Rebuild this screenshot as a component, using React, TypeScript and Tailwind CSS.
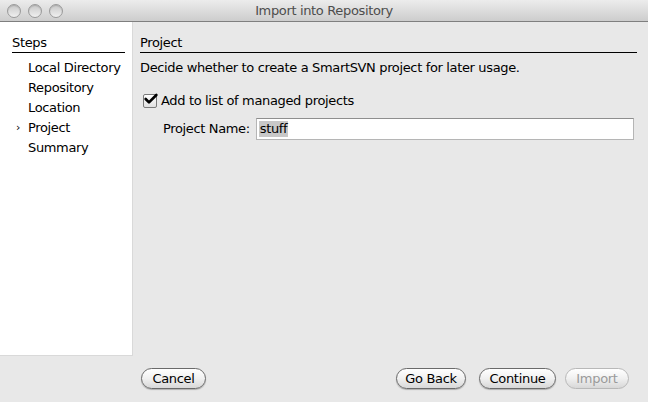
import { Check } from 'lucide-react';

const steps = ['Local Directory', 'Repository', 'Location', 'Project', 'Summary'];
const current = 'Project';

const Light = () => (
  <div className="w-[14px] h-[14px] rounded-full border border-[#9a9a9a] bg-gradient-to-b from-[#c8c8c8] to-[#f0f0f0] shadow-[inset_0_1px_1px_rgba(0,0,0,0.15)]" />
);

const Button = ({ label, disabled, w }: { label: string; disabled?: boolean; w: string }) => (
  <button
    className={`${w} h-[21px] rounded-full border text-[13px] leading-none flex items-center justify-center tracking-[-0.3px] bg-gradient-to-b from-white via-[#f0f0f0] to-[#d8d8d8] ${
      disabled ? 'border-[#b8b8b8] text-[#9a9a9a]' : 'border-[#6a6a6a] text-black shadow-[0_1px_1px_rgba(0,0,0,0.25)]'
    }`}>
    {label}
  </button>
);

export default function App() {
  return (
    <div className="w-[648px] h-[402px] bg-[#e8e8e8] flex flex-col overflow-hidden text-[13px] text-black tracking-[-0.35px]" style={{ fontFamily: '"Lucida Grande", "DejaVu Sans", sans-serif' }}>
      <div className="h-[22px] shrink-0 relative flex items-center justify-center bg-gradient-to-b from-[#ececec] to-[#cdcdcd] border-b border-[#7f7f7f]">
        <div className="absolute left-[7px] top-[4px] flex gap-[7px]">
          <Light />
          <Light />
          <Light />
        </div>
        <span className="text-[#4d4d4d] text-[13px]">Import into Repository</span>
      </div>

      <div className="flex h-[334px]">
        <div className="w-[133px] shrink-0 bg-white border-r border-b border-[#d9d9d9] pl-[12px] pr-[7px] pt-[12px]">
          <div className="border-b border-black leading-[17px] pb-[1px]">Steps</div>
          <div className="mt-[5px]">
            {steps.map(s => (
              <div key={s} className="h-[20px] flex items-center">
                <span className="w-[16px] text-[11px] pl-[4px]">{s === current ? '›' : ''}</span>
                <span>{s}</span>
              </div>
            ))}
          </div>
        </div>

        <div className="flex-1 pl-[7px] pr-[11px] pt-[12px]">
          <div className="border-b border-black leading-[17px] pb-[1px]">Project</div>
          <div className="mt-[5px] h-[20px] flex items-center">Decide whether to create a SmartSVN project for later usage.</div>
          <div className="mt-[15px] ml-[3px] h-[16px] flex items-center gap-[4px]">
            <div className="w-[14px] h-[14px] rounded-[2px] border border-[#7a7a7a] bg-gradient-to-b from-white to-[#e0e0e0] flex items-center justify-center">
              <Check size={16} strokeWidth={4} className="text-black shrink-0 -mt-[4px] ml-[2px]" />
            </div>
            <span>Add to list of managed projects</span>
          </div>
          <div className="mt-[9px] ml-[23px] flex items-center gap-[6px]">
            <span>Project Name:</span>
            <div className="flex-1 h-[22px] bg-white border border-[#b5b5b5] border-t-[#8e8e8e] flex items-center px-[2px] mr-[3px]">
              <span className="bg-[#c8c8c8] px-[1px] leading-[16px]">stuff</span>
            </div>
          </div>
        </div>
      </div>

      <div className="flex-1 flex items-center pl-[141px] pr-[19px] pb-[2px]">
        <Button label="Cancel" w="w-[65px]" />
        <div className="flex-1" />
        <div className="flex gap-[13px]">
          <Button label="Go Back" w="w-[70px]" />
          <Button label="Continue" w="w-[77px]" />
        </div>
        <div className="ml-[9px]">
          <Button label="Import" w="w-[64px]" disabled />
        </div>
      </div>
    </div>
  );
}
